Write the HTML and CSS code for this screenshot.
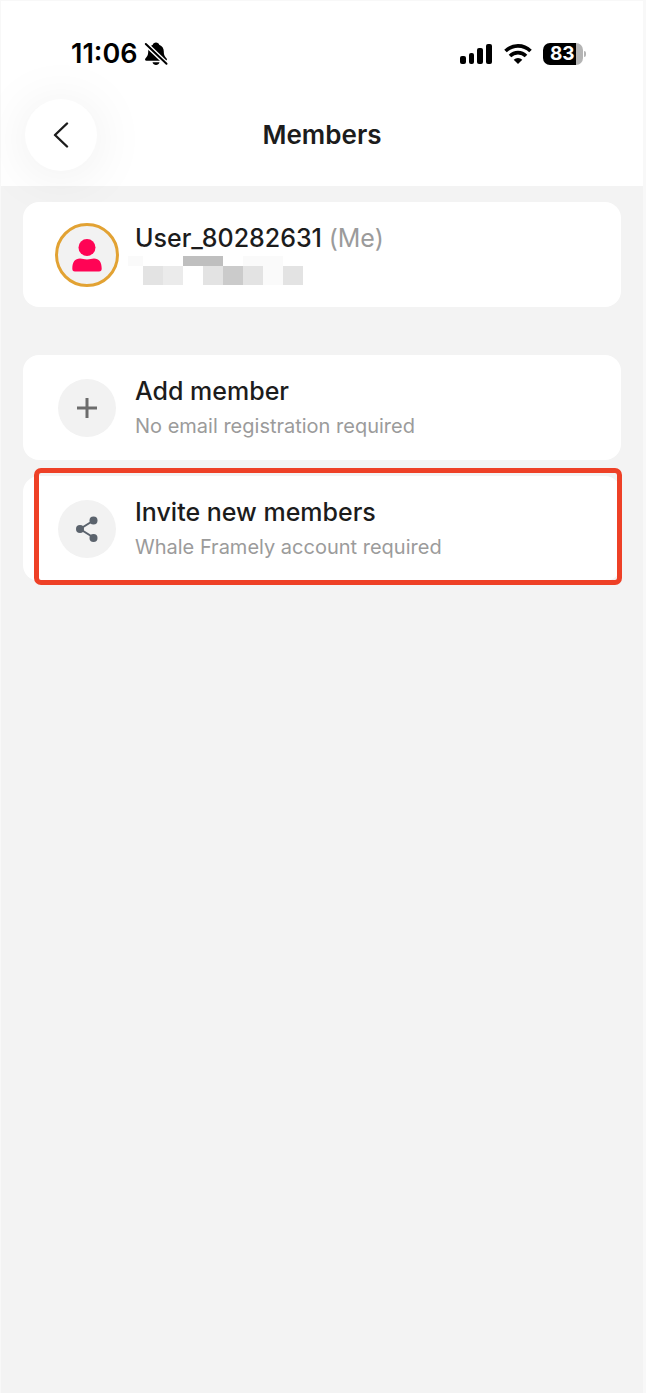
FILE: index.html
```html
<!DOCTYPE html>
<html lang="en">
<head>
    <meta charset="UTF-8">
    <meta name="viewport" content="width=device-width, initial-scale=1.0">
    <title>Members</title>
    <link rel="stylesheet" href="styles.css">
</head>
<body>
    <div class="screen">
        <header class="topbar">
            <div class="status">
                <span class="time">11:06</span>
                <svg class="bell" width="24" height="24" viewBox="0 0 24 24">
                    <path d="M12 .5c-1.700 0-2.900 1-3.200 2.200C5.500 4 4.200 6.600 4.200 9.500c0 4-1.300 5.300-2.600 6.700-1 1.100-.6 2.600.9 2.600h19c1.500 0 1.900-1.500.9-2.600-1.300-1.400-2.600-2.700-2.600-6.700 0-2.900-1.300-5.500-4.600-6.800C14.900 1.500 13.700.5 12 .5z"/>
                    <path d="M8.500 20.300h7c-.5 1.700-1.800 2.700-3.500 2.700s-3-1-3.500-2.700z"/>
                    <path d="M2.500 .8l21 20" stroke="#fff" stroke-width="2"/>
                    <path d="M.5 2.800l21 20" stroke="#fff" stroke-width="2"/>
                    <path d="M1.800 2l20.700 19.800" stroke="#000" stroke-width="2" stroke-linecap="round"/>
                </svg>
                <svg class="signal" width="32" height="20" viewBox="0 0 32 20">
                    <rect x="0" y="12" width="6" height="8" rx="2"/>
                    <rect x="9" y="9" width="5" height="11" rx="2"/>
                    <rect x="17" y="4" width="6" height="16" rx="2"/>
                    <rect x="26" y="0" width="6" height="20" rx="2"/>
                </svg>
                <svg class="wifi" width="28" height="20" viewBox="0 0 28 20" fill="none" stroke="#000" stroke-width="3.600">
                    <path d="M1.500 7a17.700 17.700 0 0 1 25 0"/>
                    <path d="M6 11.900a11.300 11.300 0 0 1 16 0"/>
                    <path d="M14 20l-4.300-4.300a6.200 6.200 0 0 1 8.600 0z" fill="#000" stroke="none"/>
                </svg>
                <span class="battery">83</span>
                <span class="battery-tip"></span>
            </div>
            <div class="nav">
                <button class="back" aria-label="Back">
                    <svg width="16" height="26" viewBox="0 0 16 26" fill="none" stroke="#1c1c1c" stroke-width="2.400" stroke-linecap="round" stroke-linejoin="round">
                        <path d="M14 1.500L2 13l12 11.500"/>
                    </svg>
                </button>
                <h1>Members</h1>
            </div>
        </header>
        <main>
            <section class="card me">
                <span class="slot">
                    <span class="avatar">
                        <svg width="30" height="34" viewBox="0 0 30 34" fill="#ff0455">
                            <circle cx="15" cy="9.500" r="8.500"/>
                            <path d="M3 33.500C1 33.500.300 32.500.300 30.500c0-6.500 2.700-10 7.700-10 2.500 0 4 1 7 1s4.500-1 7-1c5 0 7.700 3.500 7.700 10 0 2-.7 3-2.700 3z"/>
                        </svg>
                    </span>
                </span>
                <span class="text">
                    <span class="title">User_80282631 <span class="tag">(Me)</span></span>
                    <span class="mosaic">
                        <i class="m1"></i><i></i><i></i><i class="m5"></i><i class="m5"></i><i></i><i class="m1"></i><i class="m1"></i><i></i>
                        <i></i><i class="m3"></i><i class="m2"></i><i></i><i class="m3"></i><i class="m4"></i><i class="m3"></i><i class="m1"></i><i class="m3"></i>
                    </span>
                </span>
            </section>
            <button class="card">
                <span class="slot">
                    <span class="icon">
                        <svg width="20" height="20" viewBox="0 0 20 20" stroke="#6c6c6c" stroke-width="3">
                            <path d="M10 0v20M0 10h20"/>
                        </svg>
                    </span>
                </span>
                <span class="text">
                    <span class="title">Add member</span>
                    <span class="sub">No email registration required</span>
                </span>
            </button>
            <button class="card marked">
                <span class="slot">
                    <span class="icon">
                        <svg width="22" height="26" viewBox="0 0 22 26" fill="#5b636d">
                            <path d="M17.500 4.500L4 13l13.500 8.500" fill="none" stroke="#5b636d" stroke-width="2"/>
                            <circle cx="17.500" cy="4.500" r="4"/>
                            <circle cx="4" cy="13" r="4"/>
                            <circle cx="17.500" cy="22" r="4"/>
                        </svg>
                    </span>
                </span>
                <span class="text">
                    <span class="title">Invite new members</span>
                    <span class="sub">Whale Framely account required</span>
                </span>
            </button>
        </main>
    </div>
</body>
</html>
```
FILE: styles.css
```css
* {
    box-sizing: border-box;
}
body {
    margin: 0;
    padding: 1px 3px 0 1px;
    min-height: 100vh;
    display: flex;
    background-color: #f8f8f8;
    font-family: Inter, "Liberation Sans", sans-serif;
    color: #1c1c1c;
}
button {
    border: none;
    font: inherit;
    color: inherit;
    text-align: left;
    cursor: pointer;
}
.screen {
    flex: 1;
    background-color: #f3f3f3;
}
.topbar {
    background-color: #fff;
    padding: 35px 24px 15px;
}
.status {
    display: flex;
    align-items: center;
    height: 36px;
    padding: 0 33px 0 46px;
    color: #000;
}
.time {
    font-size: 27px;
    font-weight: 600;
    line-height: 36px;
}
.bell {
    margin-left: 6px;
}
.signal {
    margin-left: auto;
}
.wifi {
    margin: 0 11px 0 12px;
}
.battery {
    width: 40px;
    height: 22px;
    padding-left: 7px;
    border-radius: 7px;
    background: linear-gradient(to right, #000 33px, #b4b4b4 33px);
    color: #fff;
    font-size: 19px;
    font-weight: 700;
    line-height: 22px;
}
.battery-tip {
    width: 2px;
    height: 6px;
    margin-left: 1px;
    border-radius: 0 2px 2px 0;
    background-color: #b4b4b4;
}
.nav {
    display: grid;
    grid-template-columns: 72px 1fr 72px;
    align-items: center;
    margin-top: 27px;
}
.back {
    display: flex;
    align-items: center;
    justify-content: center;
    width: 72px;
    height: 72px;
    padding: 0;
    border-radius: 50%;
    background-color: #fff;
    box-shadow: 0 4px 56px rgba(0, 0, 0, 0.08);
}
h1 {
    margin: 0;
    text-align: center;
    font-size: 26px;
    font-weight: 600;
    line-height: 38px;
}
main {
    display: flex;
    flex-direction: column;
    gap: 16px;
    padding: 16px 22px;
}
.card {
    position: relative;
    display: flex;
    align-items: center;
    gap: 16px;
    width: 100%;
    height: 105px;
    padding: 0 32px;
    border-radius: 16px;
    background-color: #fff;
}
.me {
    margin-bottom: 32px;
}
.marked::after {
    content: "";
    position: absolute;
    inset: -8px -1px -4px 11px;
    border: 5px solid #ee4026;
    border-radius: 7px;
}
.slot {
    display: flex;
    justify-content: center;
    width: 64px;
}
.avatar, .icon {
    display: flex;
    align-items: center;
    justify-content: center;
    border-radius: 50%;
    background-color: #f2f2f2;
}
.avatar {
    width: 64px;
    height: 64px;
    border: 3px solid #e2a233;
}
.icon {
    width: 58px;
    height: 58px;
}
.text {
    display: flex;
    flex-direction: column;
}
.title {
    font-size: 25px;
    font-weight: 500;
    line-height: 36px;
}
.tag {
    font-weight: 400;
    color: #9b9b9b;
}
.sub {
    font-size: 20px;
    line-height: 34px;
    color: #9b9b9b;
}
.mosaic {
    display: grid;
    grid-template-columns: 15px repeat(8, 20px);
    grid-template-rows: 10px 19px;
    height: 34px;
    margin-left: -7px;
}
.m1 {
    background-color: #fafafa;
}
.m2 {
    background-color: #ebebeb;
}
.m3 {
    background-color: #e3e3e3;
}
.m4 {
    background-color: #cbcbcb;
}
.m5 {
    background-color: #bfbfbf;
}
```
